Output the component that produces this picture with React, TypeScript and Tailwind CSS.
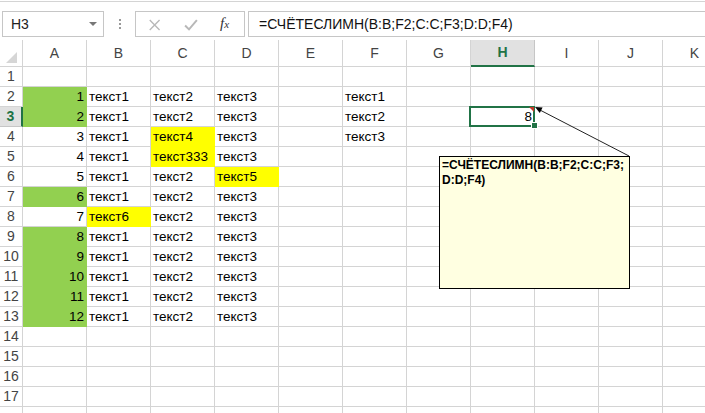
import React from 'react';

const COLS = ['A', 'B', 'C', 'D', 'E', 'F', 'G', 'H', 'I', 'J', 'K'];

type Cell = { v: string; fill?: 'green' | 'yellow'; num?: boolean };

const G = 'green' as const;
const Y = 'yellow' as const;

// row number -> column letter -> cell
const DATA: Record<number, Record<string, Cell>> = {
  2: { A: { v: '1', fill: G, num: true }, B: { v: 'текст1' }, C: { v: 'текст2' }, D: { v: 'текст3' }, F: { v: 'текст1' } },
  3: { A: { v: '2', fill: G, num: true }, B: { v: 'текст1' }, C: { v: 'текст2' }, D: { v: 'текст3' }, F: { v: 'текст2' }, H: { v: '8', num: true } },
  4: { A: { v: '3', num: true }, B: { v: 'текст1' }, C: { v: 'текст4', fill: Y }, D: { v: 'текст3' }, F: { v: 'текст3' } },
  5: { A: { v: '4', num: true }, B: { v: 'текст1' }, C: { v: 'текст333', fill: Y }, D: { v: 'текст3' } },
  6: { A: { v: '5', num: true }, B: { v: 'текст1' }, C: { v: 'текст2' }, D: { v: 'текст5', fill: Y } },
  7: { A: { v: '6', fill: G, num: true }, B: { v: 'текст1' }, C: { v: 'текст2' }, D: { v: 'текст3' } },
  8: { A: { v: '7', num: true }, B: { v: 'текст6', fill: Y }, C: { v: 'текст2' }, D: { v: 'текст3' } },
};
for (let r = 9; r <= 13; r++) {
  DATA[r] = { A: { v: String(r - 1), fill: G, num: true }, B: { v: 'текст1' }, C: { v: 'текст2' }, D: { v: 'текст3' } };
}

const ROWS = Array.from({ length: 18 }, (_, i) => i + 1);

function FormulaBar() {
  return (
    <div className="flex items-start h-[38px] pt-[9px]">
      <div className="ml-[2px] w-[102px] h-[26px] border border-[#c6c6c6] flex items-center justify-between pl-[8px] pr-[6px]">
        <span className="text-[14px] text-[#222]">H3</span>
        <span className="w-0 h-0 border-l-[4px] border-r-[4px] border-t-[4px] border-l-transparent border-r-transparent border-t-[#777]" />
      </div>
      <div className="w-[31px] h-[26px] flex flex-col items-center justify-center gap-[2px]">
        <span className="w-[2px] h-[2px] bg-[#999]" />
        <span className="w-[2px] h-[2px] bg-[#999]" />
        <span className="w-[2px] h-[2px] bg-[#999]" />
      </div>
      <div className="w-[110px] h-[26px] border border-[#c6c6c6] flex items-center">
        <svg width="110" height="24" viewBox="0 0 110 24">
          <path d="M14 8 L24 18 M24 8 L14 18" stroke="#b8b8b8" strokeWidth="1.4" fill="none" />
          <path d="M50 13.5 L54 17.5 L62 8" stroke="#b8b8b8" strokeWidth="2" fill="none" />
        </svg>
        <span className="absolute ml-[84px] mt-[-2px] font-['Liberation_Serif',serif] italic text-[15px] text-[#333]">
          f<span className="text-[11px]">x</span>
        </span>
      </div>
      <div className="flex-1 ml-[3px] -mr-[2px] h-[26px] border border-[#c6c6c6] flex items-center pl-[10px]">
        <span className="text-[14px] text-[#111] whitespace-nowrap">=СЧЁТЕСЛИМН(B:B;F2;C:C;F3;D:D;F4)</span>
      </div>
    </div>
  );
}

function Grid() {
  return (
    <div className="grid grid-cols-[23px_repeat(11,64px)] grid-rows-[27px_repeat(18,20px)]">
      {/* select-all corner */}
      <div className="border-r border-b border-[#d4d4d4] relative">
        <svg className="absolute left-[6px] top-[12px]" width="12" height="12" viewBox="0 0 12 12">
          <polygon points="11,0 11,11 0,11" fill="#d6d6d6" />
        </svg>
      </div>
      {COLS.map((c) =>
        c === 'H' ? (
          <div key={c} className="bg-[#e1e1e1] border-r border-[#c6c6c6] border-b-2 border-b-[#217346] flex items-center justify-center text-[14px] font-bold text-[#217346]">
            {c}
          </div>
        ) : (
          <div key={c} className="border-r border-b border-[#d4d4d4] flex items-center justify-center text-[14px] text-[#444]">
            {c}
          </div>
        )
      )}
      {ROWS.map((r) => (
        <React.Fragment key={r}>
          {r === 3 ? (
            <div className="bg-[#e1e1e1] border-b border-[#c6c6c6] border-r-2 border-r-[#217346] flex items-center justify-center text-[14px] font-bold text-[#217346]">
              {r}
            </div>
          ) : (
            <div className="border-r border-b border-[#d4d4d4] flex items-center justify-center text-[14px] text-[#444]">
              {r < 18 ? r : ''}
            </div>
          )}
          {COLS.map((c) => {
            const cell = DATA[r]?.[c];
            const fill =
              cell?.fill === 'green'
                ? 'bg-[#92d050] border-[#92d050]'
                : cell?.fill === 'yellow'
                ? 'bg-[#ffff00] border-[#ffff00]'
                : 'border-[#d4d4d4]';
            const selected = r === 3 && c === 'H';
            return (
              <div
                key={c}
                className={`relative border-r border-b ${fill} flex items-end pb-[1px] text-[13.5px] leading-[17px] text-black whitespace-nowrap ${
                  cell?.num ? 'justify-end pr-[2px]' : 'justify-start pl-[2px]'
                }`}
              >
                {cell?.v}
                {selected && (
                  <>
                    <div className="absolute left-[-2px] top-[-1px] w-[66px] h-[21px] border-2 border-[#217346] z-10" />
                    <div className="absolute right-0 top-0 w-0 h-0 border-b-[5px] border-b-transparent border-r-[5px] border-r-[#c0392b] z-20" />
                    <div className="absolute left-[60px] top-[15px] w-[7px] h-[7px] bg-[#217346] border border-white z-20" />
                  </>
                )}
              </div>
            );
          })}
        </React.Fragment>
      ))}
    </div>
  );
}

function Comment() {
  return (
    <>
      <svg className="absolute left-0 top-0 z-30 pointer-events-none" width="705" height="413">
        <line x1="629" y1="156" x2="538" y2="109" stroke="#222" strokeWidth="1" />
        <polygon points="535,107 539.8,112.9 542.6,107.4" fill="#000" />
      </svg>
      <div className="absolute left-[439px] top-[156px] w-[191px] h-[133px] bg-[#ffffe1] border border-black z-30 pl-[2px] pt-[1px]">
        <p className="font-['Liberation_Sans',Arial,sans-serif] font-bold text-[12px] leading-[15px] text-black whitespace-nowrap">
          =СЧЁТЕСЛИМН(B:B;F2;C:C;F3;
          <br />
          D:D;F4)
        </p>
      </div>
    </>
  );
}

export default function App() {
  return (
    <div className="relative w-[705px] h-[413px] overflow-hidden bg-white font-['Liberation_Sans',Arial,sans-serif]">
      <div className="h-px" />
      <div className="h-px bg-[#d4d4d4]" />
      <FormulaBar />
      <Grid />
      <Comment />
    </div>
  );
}
